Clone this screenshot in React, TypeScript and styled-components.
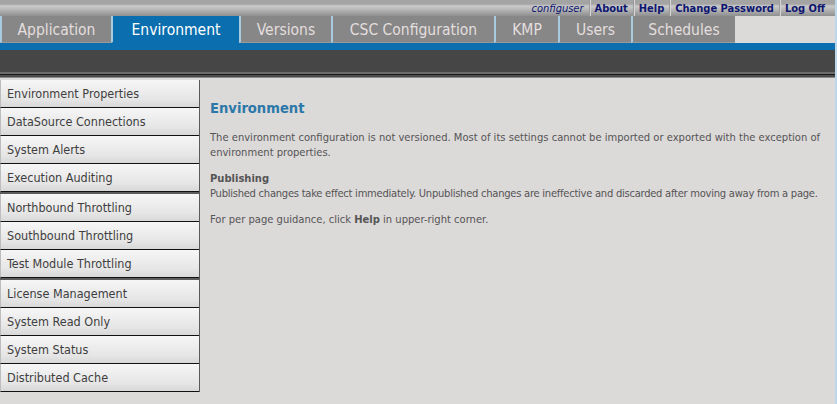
import React from "react";
import styled, { createGlobalStyle } from "styled-components";

const FONT = `"DejaVu Sans Condensed", "DejaVu Sans", Verdana, sans-serif`;

const Global = createGlobalStyle`
  html, body { margin: 0; padding: 0; }
  body {
    background: #dcd9d9;
    font-family: ${FONT};
    width: 837px;
    height: 404px;
    overflow: hidden;
  }
`;

const Page = styled.div`
  display: flex;
  flex-direction: column;
  width: 837px;
  min-height: 404px;
  border-right: 2px solid #bcd6ea;
  box-sizing: border-box;
`;

const TopStrip = styled.div`
  height: 16px;
  display: flex;
  justify-content: flex-end;
  align-items: stretch;
  padding-right: 5px;
  background: linear-gradient(#a4a4a4 0px, #a4a4a4 4px, #cacaca 6px, #b4b4b4 10px, #8f8f8f 16px);
`;

const TopLink = styled.a<{ $user?: boolean }>`
  display: flex;
  align-items: center;
  padding: 0 5px;
  font-size: 11px;
  font-weight: ${(p) => (p.$user ? "normal" : "bold")};
  font-style: ${(p) => (p.$user ? "italic" : "normal")};
  color: #0d1670;
  text-decoration: none;
  border-left: ${(p) => (p.$user ? "none" : "1px solid #9a9a9a")};
  box-shadow: ${(p) => (p.$user ? "none" : "inset 1px 0 0 #d6d6d6")};
`;

const TabRow = styled.div`
  height: 27px;
  display: flex;
  background: #dcd9d9;
`;

const Tab = styled.div<{ $active?: boolean; $w: number }>`
  width: ${(p) => p.$w}px;
  display: flex;
  align-items: center;
  justify-content: center;
  font-size: 15.5px;
  color: ${(p) => (p.$active ? "#ffffff" : "#e4dede")};
  background: ${(p) => (p.$active ? "#0b6eae" : "#878787")};
  border-left: 2px solid #a9cbe2;
  padding-top: 1px;
  box-sizing: border-box;
  border-bottom: 1px solid ${(p) => (p.$active ? "#0b6eae" : "#9a9a9a")};
`;

const BlueBar = styled.div`
  height: 7px;
  background: #0b6eae;
`;

const DarkBar = styled.div`
  height: 22px;
  background: #464646;
`;

const Rule = styled.div`
  height: 2px;
  background: #6c6c6c;
  border-bottom: 1px solid #1a1a1a;
  box-shadow: 0 2px 0 #4a4a4a, 0 3px 0 #8a8a8a;
  margin-bottom: 5px;
`;

const Body = styled.div`
  display: flex;
  align-items: flex-start;
`;

const Sidebar = styled.nav`
  width: 200px;
  flex-shrink: 0;
  border-right: 1px solid #5a5a5a;
  box-sizing: border-box;
  display: flex;
  flex-direction: column;
`;

const Group = styled.div<{ $last?: boolean }>`
  display: flex;
  flex-direction: column;
  border-bottom: ${(p) => (p.$last ? "none" : "2px solid #5c5c5c")};
`;

const Item = styled.a`
  height: 27px;
  line-height: 27px;
  padding-left: 6px;
  font-size: 12.5px;
  color: #3e3e3e;
  text-decoration: none;
  background: linear-gradient(#f6f6f6, #e6e6e6 70%, #d8d8d8);
  border-bottom: 1px solid #111;
  border-left: 1px solid #bdbdbd;
`;

const Content = styled.main`
  flex: 1;
  padding: 18px 2px 0 10px;
  color: #555;
  font-size: 11.1px;
  line-height: 15px;
`;

const Heading = styled.h1`
  margin: 0 0 12px 0;
  font-size: 14.6px;
  line-height: 20px;
  font-weight: bold;
  color: #2b78a8;
`;

const Para = styled.p<{ $tight?: boolean }>`
  margin: 0 0 11px 0;
  letter-spacing: ${(p) => (p.$tight ? "-0.26px" : "0")};
`;

const SubHead = styled.div`
  font-weight: bold;
  letter-spacing: 0;
`;

const groups = [
  ["Environment Properties", "DataSource Connections", "System Alerts", "Execution Auditing"],
  ["Northbound Throttling", "Southbound Throttling", "Test Module Throttling"],
  ["License Management", "System Read Only", "System Status", "Distributed Cache"],
];

const tabs: [string, number][] = [
  ["Application", 111],
  ["Environment", 128],
  ["Versions", 92],
  ["CSC Configuration", 163],
  ["KMP", 64],
  ["Users", 73],
  ["Schedules", 104],
];

export default function App() {
  return (
    <Page>
      <Global />
      <TopStrip>
        <TopLink $user>configuser</TopLink>
        <TopLink>About</TopLink>
        <TopLink>Help</TopLink>
        <TopLink>Change Password</TopLink>
        <TopLink>Log Off</TopLink>
      </TopStrip>
      <TabRow>
        {tabs.map(([t, w]) => (
          <Tab key={t} $w={w} $active={t === "Environment"}>
            {t}
          </Tab>
        ))}
      </TabRow>
      <BlueBar />
      <DarkBar />
      <Rule />
      <Body>
        <Sidebar>
          {groups.map((g, i) => (
            <Group key={i} $last={i === groups.length - 1}>
              {g.map((it) => (
                <Item key={it}>{it}</Item>
              ))}
            </Group>
          ))}
        </Sidebar>
        <Content>
          <Heading>Environment</Heading>
          <Para>
            The environment configuration is not versioned. Most of its settings cannot be imported or exported with
            the exception of environment properties.
          </Para>
          <Para $tight>
            <SubHead>Publishing</SubHead>
            Published changes take effect immediately. Unpublished changes are ineffective and discarded after moving
            away from a page.
          </Para>
          <Para>
            For per page guidance, click <b>Help</b> in upper-right corner.
          </Para>
        </Content>
      </Body>
    </Page>
  );
}
